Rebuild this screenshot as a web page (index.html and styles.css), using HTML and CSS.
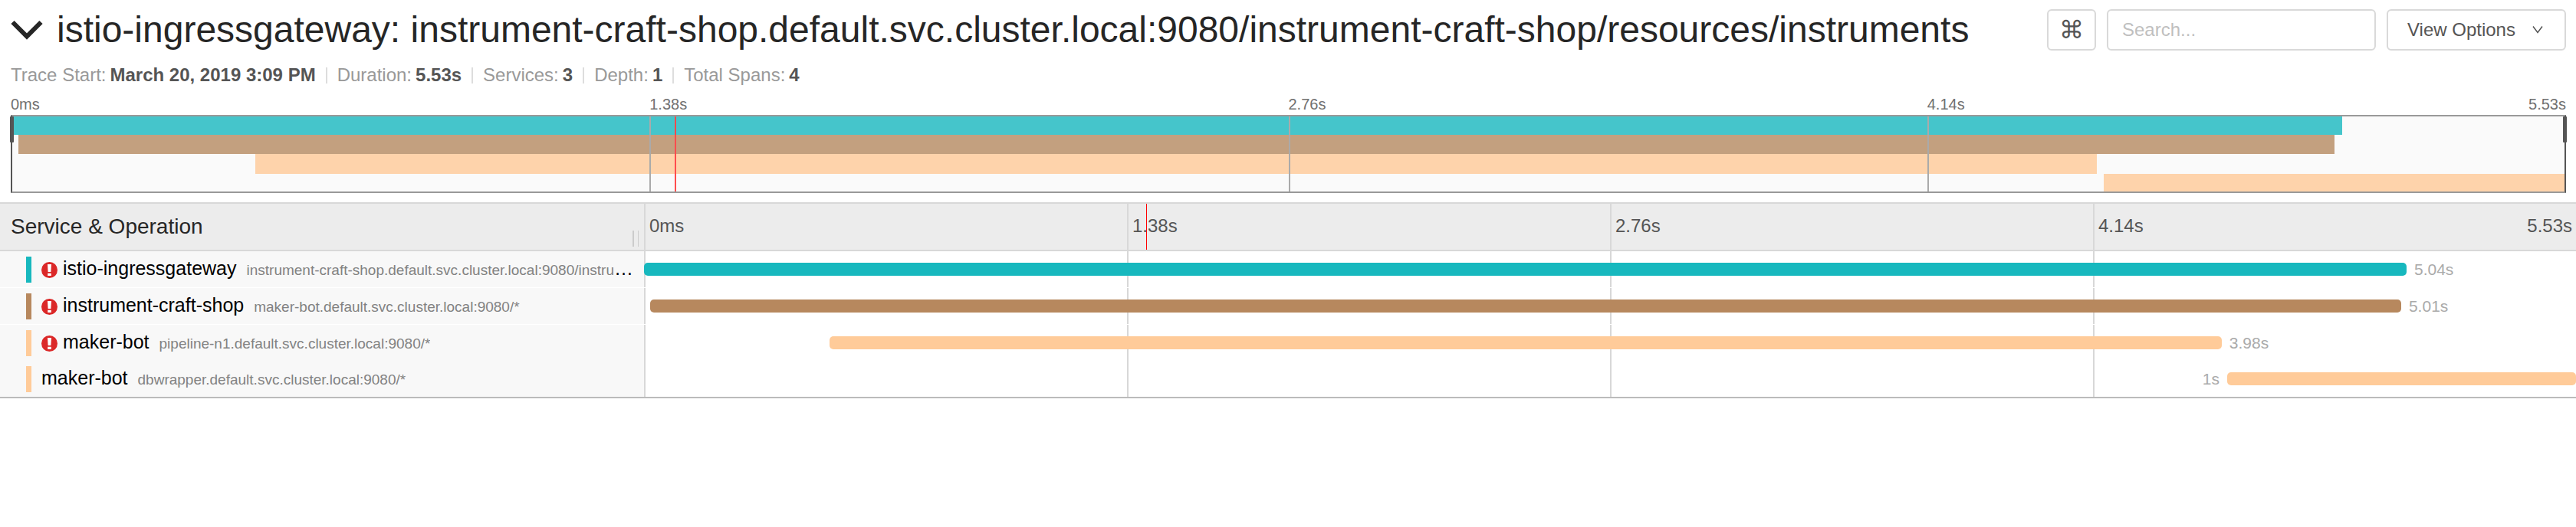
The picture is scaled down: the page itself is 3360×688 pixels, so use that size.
FILE: index.html
```html
<!DOCTYPE html>
<html lang="en">
<head>
<meta charset="utf-8">
<title>Trace timeline</title>
<link rel="stylesheet" href="styles.css">
</head>
<body>
<header class="trace-header">
  <div class="title-row">
    <button class="collapse" type="button" aria-label="Collapse header">
      <svg width="42" height="26" viewBox="0 0 42 26" aria-hidden="true"><path d="M2.5 3 21 21.500 39.500 3" fill="none" stroke="#262626" stroke-width="6"/></svg>
    </button>
    <h1 class="title">istio-ingressgateway: instrument-craft-shop.default.svc.cluster.local:9080/instrument-craft-shop/resources/instruments</h1>
    <div class="tools">
      <button class="control shortcuts" type="button" aria-label="Keyboard shortcuts">⌘</button>
      <input class="control search" type="text" placeholder="Search..." aria-label="Search">
      <button class="control options" type="button">View Options
        <svg width="14" height="12" viewBox="0 0 14 12" aria-hidden="true"><path d="M1 1.500 7 9.500 13 1.500" fill="none" stroke="#555" stroke-width="1.500"/></svg>
      </button>
    </div>
  </div>
  <ul class="summary">
    <li>Trace Start: <strong>March 20, 2019 3:09 PM</strong></li>
    <li>Duration: <strong>5.53s</strong></li>
    <li>Services: <strong>3</strong></li>
    <li>Depth: <strong>1</strong></li>
    <li>Total Spans: <strong>4</strong></li>
  </ul>
</header>

<section class="minimap" aria-label="Trace overview">
  <div class="map-ticks"><span>0ms</span><span>1.38s</span><span>2.76s</span><span class="last">4.14s<b class="end">5.53s</b></span></div>
  <div class="map">
    <div class="map-span teal" style="margin-left:0%;width:91.23%"></div>
    <div class="map-span brown" style="margin-left:0.3%;width:90.63%"></div>
    <div class="map-span peach" style="margin-left:9.57%;width:72.06%"></div>
    <div class="map-span peach" style="margin-left:81.9%;width:18.1%"></div>
    <i class="map-line" style="left:25%"></i>
    <i class="map-line" style="left:50%"></i>
    <i class="map-line" style="left:75%"></i>
    <i class="map-cursor" style="left:25.97%"></i>
    <div class="frame"></div>
    <i class="handle start"></i>
    <i class="handle end-handle"></i>
  </div>
</section>

<main class="timeline">
  <div class="row head">
    <div class="name-head"><h2>Service &amp; Operation</h2><i class="resizer"></i></div>
    <div class="track">
      <span class="tick">0ms</span><span class="tick">1.38s</span><span class="tick">2.76s</span><span class="tick">4.14s<b class="end">5.53s</b></span>
      <i class="cursor" style="left:26.01%"></i>
    </div>
  </div>
  <div class="row ruled">
    <div class="name teal-edge">
      <div class="label"><svg class="alert" viewBox="0 0 21 21" role="img" aria-label="Error"><circle cx="10.500" cy="10.500" r="10.500" fill="#db2828"/><path d="M8 3h5l-.6 10H8.600zM8.200 14.800h4.600v3.200H8.200z" fill="#fff"/></svg>istio-ingressgateway<small>instrument-craft-shop.default.svc.cluster.local:9080/instrument-craft-shop/resources/instruments</small></div>
    </div>
    <div class="track">
      <span class="tick"></span><span class="tick"></span><span class="tick"></span><span class="tick"></span>
      <div class="lane"><div class="bar teal-fill" style="margin-left:0%;width:91.23%"></div><span class="time">5.04s</span></div>
    </div>
  </div>
  <div class="row ruled">
    <div class="name brown-edge">
      <div class="label"><svg class="alert" viewBox="0 0 21 21" role="img" aria-label="Error"><circle cx="10.500" cy="10.500" r="10.500" fill="#db2828"/><path d="M8 3h5l-.6 10H8.600zM8.200 14.800h4.600v3.200H8.200z" fill="#fff"/></svg>instrument-craft-shop<small>maker-bot.default.svc.cluster.local:9080/*</small></div>
    </div>
    <div class="track">
      <span class="tick"></span><span class="tick"></span><span class="tick"></span><span class="tick"></span>
      <div class="lane"><div class="bar brown-fill" style="margin-left:0.32%;width:90.63%"></div><span class="time">5.01s</span></div>
    </div>
  </div>
  <div class="row">
    <div class="name peach-edge">
      <div class="label"><svg class="alert" viewBox="0 0 21 21" role="img" aria-label="Error"><circle cx="10.500" cy="10.500" r="10.500" fill="#db2828"/><path d="M8 3h5l-.6 10H8.600zM8.200 14.800h4.600v3.200H8.200z" fill="#fff"/></svg>maker-bot<small>pipeline-n1.default.svc.cluster.local:9080/*</small></div>
    </div>
    <div class="track">
      <span class="tick"></span><span class="tick"></span><span class="tick"></span><span class="tick"></span>
      <div class="lane"><div class="bar peach-fill" style="margin-left:9.6%;width:72.06%"></div><span class="time">3.98s</span></div>
    </div>
  </div>
  <div class="row">
    <div class="name peach-edge">
      <div class="label">maker-bot<small>dbwrapper.default.svc.cluster.local:9080/*</small></div>
    </div>
    <div class="track">
      <span class="tick"></span><span class="tick"></span><span class="tick"></span><span class="tick"></span>
      <div class="lane right"><span class="time">1s</span><div class="bar peach-fill" style="width:18.06%"></div></div>
    </div>
  </div>
</main>
</body>
</html>
```
FILE: styles.css
```css
* { box-sizing: border-box; }
body {
  margin: 0;
  background: #fff;
  color: #000;
  font: 24px/28px "Liberation Sans", Arial, sans-serif;
}
h1, h2, ul { margin: 0; padding: 0; font-weight: 400; }
button, input { font: inherit; }

.trace-header { padding: 0 13px 0 14px; }
.title-row { display: flex; align-items: center; height: 78px; }
.collapse { display: flex; padding: 0; border: 0; background: none; }
.title {
  flex: 1;
  min-width: 0;
  padding-left: 18px;
  overflow: hidden;
  color: #262626;
  font-size: 48px;
  line-height: 60px;
  text-overflow: ellipsis;
  white-space: nowrap;
}
.tools { display: flex; gap: 14px; }
.control {
  height: 54px;
  border: 2px solid #d9d9d9;
  border-radius: 6px;
  background: #fff;
  color: #555;
}
.shortcuts { width: 64px; padding: 0; font-size: 32px; }
.search { width: 351px; padding: 0 18px; }
.search::placeholder { color: #bfbfbf; opacity: 1; }
.options {
  display: flex;
  align-items: center;
  justify-content: space-between;
  width: 234px;
  padding: 0 28px 0 25px;
}

.summary { display: flex; padding: 6px 0; list-style: none; color: #999; }
.summary li { display: flex; gap: 5px; align-items: center; }
.summary li + li::before { content: ""; width: 2px; height: 21px; margin: 0 8px 0 13px; background: #ddd; }
.summary strong { color: #555; }

.minimap { padding: 4px 13px 12px 14px; }
.map-ticks { display: grid; grid-template-columns: repeat(4, 1fr); height: 28px; color: #717171; font-size: 20px; }
.map-ticks .last { display: flex; justify-content: space-between; }
.map { position: relative; display: grid; grid-template-columns: 100%; grid-template-rows: repeat(4, 1fr); height: 102px; background: #fafafa; }
.teal { background: #45c5cb; }
.brown { background: #c3a07f; }
.peach { background: #fed3ab; }
.map-line, .map-cursor { position: absolute; top: 0; bottom: 0; width: 2px; background: #aaa; }
.map-cursor { background: #ff4d4d; }
.frame { position: absolute; inset: 0; border: 2px solid #999; border-right-color: #555; border-left-color: #555; }
.handle { position: absolute; top: 2px; width: 5px; height: 34px; border-radius: 1px; background: #555; }
.start { left: -1px; }
.end-handle { right: -1px; }

.timeline { border-bottom: 2px solid #bbb; }
.row { display: grid; grid-template-columns: 25% 75%; }
.track { position: relative; display: grid; grid-template-columns: repeat(4, 1fr); }
.tick { border-left: 2px solid #d8d8d8; }
.head { height: 64px; border: solid #d8d8d8; border-width: 2px 0; background: #ececec; color: #555; }
.head .tick { display: flex; justify-content: space-between; padding: 15px 5px 0; }
.end { font-weight: 400; }
.cursor { position: absolute; top: 0; bottom: 0; width: 1px; background: #f00; }
.name-head { display: flex; justify-content: space-between; align-items: flex-end; padding: 0 7px 4px 14px; }
.name-head h2 { align-self: center; padding-top: 4px; color: #262626; font-size: 28px; line-height: 32px; }
.resizer { width: 8px; height: 21px; border: solid #ccc; border-width: 0 1px 0 2px; }

.ruled { border-bottom: 1px solid #fff; }
.name { display: flex; align-items: center; height: 47px; padding: 0 14px 0 34px; background: #f8f8f8; }
.name::before { content: ""; flex: none; width: 7px; height: 34px; margin-right: 13px; background: currentColor; }
.teal-edge { color: #17b8be; }
.brown-edge { color: #b7885e; }
.peach-edge { color: #ffcb99; }
.label { min-width: 0; overflow: hidden; color: #000; font-size: 25px; line-height: 40px; text-overflow: ellipsis; white-space: nowrap; }
.label small { margin-left: 13px; color: #828282; font-size: 19px; }
.alert { width: 21px; height: 21px; margin-right: 7px; vertical-align: -4px; }

.lane { position: absolute; inset: 0; display: flex; align-items: center; gap: 10px; }
.right { justify-content: flex-end; }
.bar { flex: none; height: 17px; border-radius: 5px; }
.teal-fill { background: #17b8be; }
.brown-fill { background: #b7885e; }
.peach-fill { background: #ffcb99; }
.time { color: #aaa; font-size: 21px; }
```
